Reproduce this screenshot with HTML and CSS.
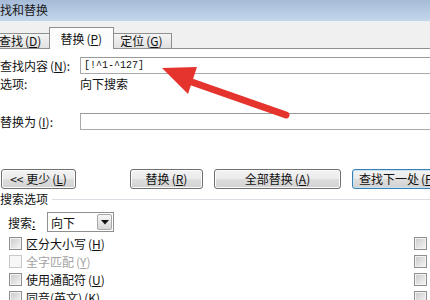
FILE: index.html
```
<!DOCTYPE html>
<html lang="zh-CN">
<head>
<meta charset="utf-8">
<title>查找和替换</title>
<link rel="stylesheet" href="styles.css">
</head>
<body>
<div class="dialog">
  <div class="titlebar">查找和替换</div>
  <div class="tabstrip">
    <div class="tab">查找<span class="acc">(<u>D</u>)</span></div>
    <div class="tab active">替换<span class="acc">(<u>P</u>)</span></div>
    <div class="tab">定位<span class="acc">(<u>G</u>)</span></div>
  </div>
  <div class="panel">
    <div class="row row-find">
      <span class="label">查找内容<span class="acc">(<u>N</u>)</span>:</span>
      <div class="input"><span class="mono">[!^1-^127]</span></div>
    </div>
    <div class="row row-opt">
      <span class="label">选项:</span>
      <span>向下搜索</span>
    </div>
    <div class="row row-replace">
      <span class="label">替换为<span class="acc">(<u>I</u>)</span>:</span>
      <div class="input"></div>
    </div>
    <div class="buttons">
      <div class="btn btn-less">&lt;&lt; 更少<span class="acc">(<u>L</u>)</span></div>
      <div class="btn btn-replace">替换<span class="acc">(<u>R</u>)</span></div>
      <div class="btn btn-all">全部替换<span class="acc">(<u>A</u>)</span></div>
      <div class="btn btn-next">查找下一处<span class="acc">(<u>F</u>)</span></div>
    </div>
    <div class="group-head"><span>搜索选项</span><div class="rule"></div></div>
    <div class="search-row">
      <span class="search-label">搜索<u>:</u></span>
      <div class="select">
        <span>向下</span>
        <div class="drop"><svg width="8" height="5" viewBox="0 0 8 5"><polygon points="0,0 8,0 4,4.5" fill="#111"/></svg></div>
      </div>
    </div>
    <div class="checks">
      <div class="check-row">
        <div class="cb-item"><span class="cb"></span><span>区分大小写<span class="acc">(<u>H</u>)</span></span></div>
        <span class="cb"></span>
      </div>
      <div class="check-row">
        <div class="cb-item disabled"><span class="cb"></span><span>全字匹配<span class="acc">(<u>Y</u>)</span></span></div>
        <span class="cb"></span>
      </div>
      <div class="check-row">
        <div class="cb-item"><span class="cb"></span><span>使用通配符<span class="acc">(<u>U</u>)</span></span></div>
        <span class="cb"></span>
      </div>
      <div class="check-row">
        <div class="cb-item"><span class="cb"></span><span>同音(英文)<span class="acc">(<u>K</u>)</span></span></div>
        <span class="cb"></span>
      </div>
    </div>
  </div>
</div>
<svg class="arrow" width="430" height="300" viewBox="0 0 430 300">
  <line x1="186" y1="80" x2="286" y2="115" stroke="#e5332e" stroke-width="7" stroke-linecap="round"/>
  <polygon points="162,68 197,67 188,94" fill="#e5332e"/>
</svg>
</body>
</html>
```
FILE: styles.css
```
* { box-sizing: border-box; }
html, body { margin: 0; padding: 0; }
body {
  width: 430px;
  height: 300px;
  overflow: hidden;
  position: relative;
  background: #fff;
  font-family: "Noto Sans CJK SC", "Noto Sans", sans-serif;
  font-size: 12px;
  color: #111;
}
u { text-decoration: underline; text-underline-offset: 1px; }
.acc { margin-left: 2px; }
.dialog { margin-left: -12px; width: 460px; }
.titlebar {
  height: 21px;
  line-height: 20px;
  background: linear-gradient(#a6bbd8, #c3d7ec);
  color: #1a1a1a;
}
.tabstrip {
  height: 27px;
  background: #f0f0f0;
  display: flex;
  align-items: flex-end;
  padding-left: 4px;
}
.tab {
  height: 15px;
  line-height: 14px;
  padding: 0 8px 0 7px;
  border: 1px solid #8e8f8f;
  border-bottom: none;
  background: linear-gradient(#f4f4f4, #e1e1e1);
  margin-left: -1px;
  white-space: nowrap;
}
.tab.active {
  height: 22px;
  padding: 4px 11px 0 10px;
  background: #fcfcfc;
  position: relative;
  z-index: 1;
  margin-bottom: -1px;
  margin-right: -1px;
}
.panel {
  border-top: 1px solid #8e8f8f;
  padding-left: 12px;
  height: 251px;
  background: #fff;
}
.row { display: flex; align-items: center; }
.label { width: 80px; flex-shrink: 0; white-space: nowrap; }
.row-find { margin-top: 8px; height: 17px; }
.row-opt { margin-top: 2px; height: 16px; line-height: 16px; }
.row-replace { margin-top: 21px; height: 17px; }
.input {
  flex: 1;
  height: 17px;
  border: 1px solid #a9a9a9;
  border-top-color: #9a9a9a;
  padding-left: 3px;
  display: flex;
  align-items: center;
}
.mono { font-family: "Liberation Mono", "DejaVu Sans Mono", monospace; font-size: 10px; color: #111; }
.buttons { margin-top: 39px; display: flex; height: 20px; }
.btn {
  flex-shrink: 0;
  height: 20px;
  line-height: 18px;
  border: 1px solid #707070;
  border-radius: 3px;
  text-align: center;
  white-space: nowrap;
  background: linear-gradient(#f3f3f3 0%, #ebebeb 48%, #dddddd 52%, #d2d2d2 100%);
  box-shadow: inset 0 0 0 1px #fbfbfb;
}
.btn-less { margin-left: 1px; width: 75px; }
.btn-replace { margin-left: 54px; width: 73px; }
.btn-all { margin-left: 11px; width: 127px; }
.btn-next {
  margin-left: 11px;
  width: 110px;
  text-align: left;
  padding-left: 6px;
  border-color: #3c7fb1;
  box-shadow: inset 0 0 0 1px #c6e4f5;
}
.group-head { margin-top: 2px; height: 16px; line-height: 16px; display: flex; align-items: center; }
.rule { flex: 1; border-top: 1px solid #d9dfe4; margin-left: 4px; }
.search-row { margin-top: 5px; height: 20px; display: flex; align-items: center; padding-left: 8px; }
.search-label { width: 39px; }
.select {
  width: 67px;
  height: 20px;
  border: 1px solid #8f8f8f;
  display: flex;
  align-items: center;
  justify-content: space-between;
  padding-left: 3px;
  padding-right: 1px;
}
.drop {
  width: 15px;
  height: 16px;
  border: 1px solid #a8a8a8;
  border-radius: 2px;
  background: linear-gradient(#f5f5f5, #d8d8d8);
  display: flex;
  align-items: center;
  justify-content: center;
}
.checks { margin-top: 2px; }
.check-row {
  height: 18px;
  display: flex;
  align-items: center;
  justify-content: space-between;
  padding-left: 9px;
  padding-right: 21px;
}
.cb-item { display: flex; align-items: center; gap: 4px; white-space: nowrap; }
.cb {
  display: block;
  width: 13px;
  height: 13px;
  border: 1px solid #8e8f8f;
  background: linear-gradient(135deg, #c9c9c9, #f6f6f6);
  box-shadow: inset 0 0 0 1px #f2f2f2;
}
.cb-item.disabled { color: #a3a3a3; }
.cb-item.disabled .cb { border-color: #c8c8c8; background: #f7f7f7; box-shadow: none; }
.arrow { position: absolute; left: 0; top: 0; pointer-events: none; }
```
